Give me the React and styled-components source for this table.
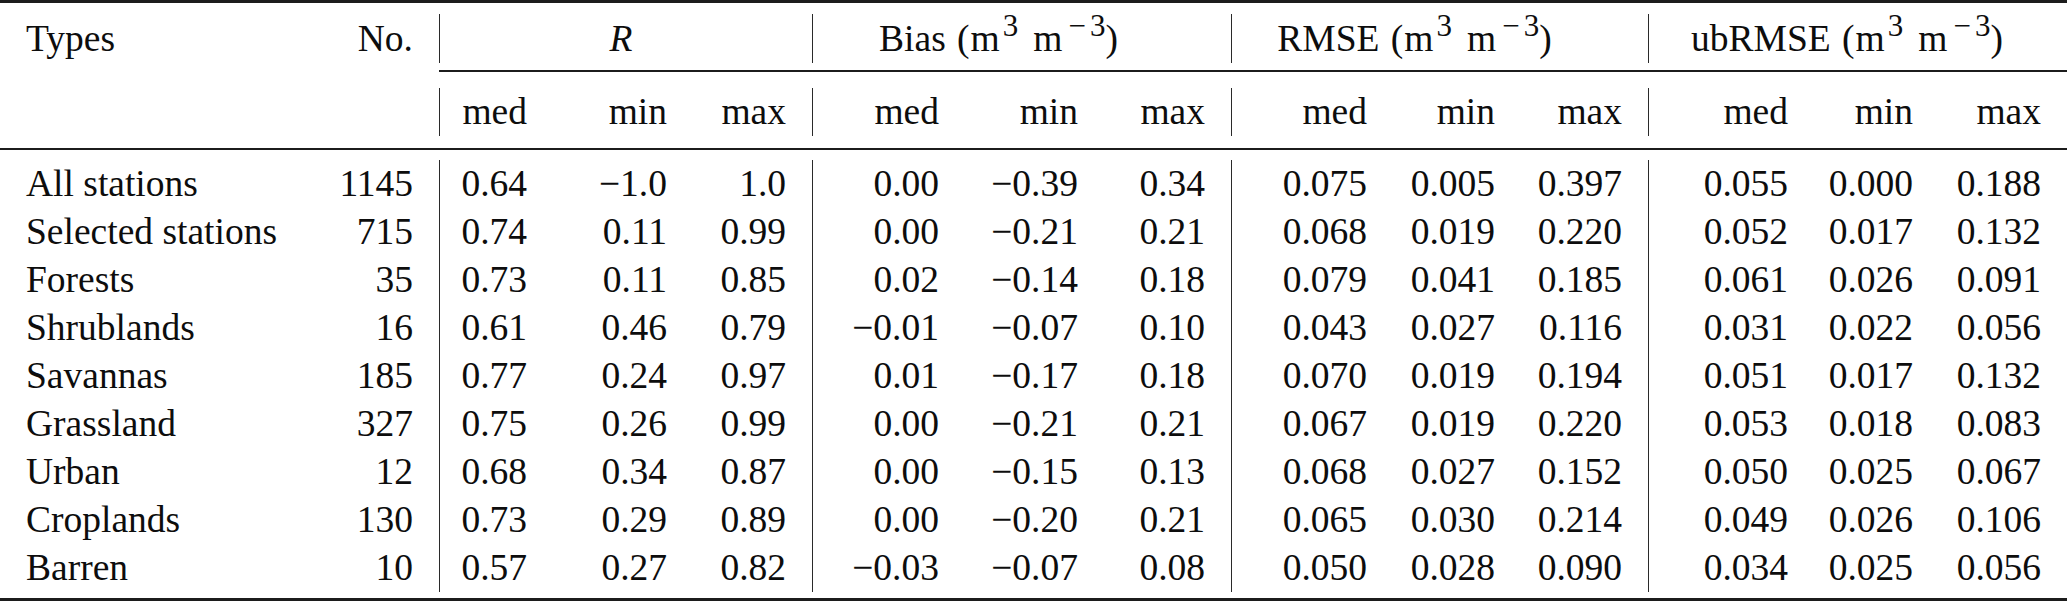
import React from "react";
import styled, { createGlobalStyle } from "styled-components";

const COLS = [300, 139, 114, 140, 119, 153, 139, 127, 162, 128, 127, 166, 125, 128];
const template = COLS.map((w) => `${w}px`).join(" ");

const GlobalStyle = createGlobalStyle`
  html, body {
    margin: 0;
    padding: 0;
    background: #ffffff;
  }
  body {
    font-family: "Liberation Serif", "Times New Roman", serif;
    color: #0d0d0d;
  }
`;

const Table = styled.div`
  width: 2067px;
  display: flex;
  flex-direction: column;
  font-size: 37.5px;
`;

const Rule = styled.div`
  height: ${(p) => p.$h}px;
  margin-left: ${(p) => p.$indent || 0}px;
  background: #1c1c1c;
`;

const Row = styled.div`
  display: grid;
  grid-template-columns: ${template};
  padding: ${(p) => p.$pad || "0"};
`;

const Body = styled.div`
  display: flex;
  flex-direction: column;
  padding: 10px 0 6px;
`;

const Cell = styled.div`
  height: ${(p) => p.$h || 48}px;
  line-height: ${(p) => p.$h || 48}px;
  box-sizing: border-box;
  text-align: ${(p) => p.$align || "right"};
  padding: ${(p) =>
    p.$align === "left" ? "0 0 0 26px" : p.$align === "center" ? `0 ${p.$shift || 0}px 0 0` : "0 26px 0 0"};
  grid-column: span ${(p) => p.$span || 1};
  border-left: ${(p) => (p.$bar ? "1.5px solid #2a2a2a" : "none")};
  white-space: nowrap;
`;

const Italic = styled.span`
  font-style: italic;
`;

const UnitWrap = styled.span`
  letter-spacing: 1px;
  margin-left: 2px;
`;

const Sup = styled.span`
  font-size: 31px;
  line-height: 0;
  position: relative;
  top: -15px;
  margin-left: 2px;
  letter-spacing: 0;
`;

const Gap = styled.span`
  display: inline-block;
  width: 15px;
`;

const Minus = styled.span`
  padding: 0 4px 0 3px;
`;

const Unit = () => (
  <UnitWrap>
    (m<Sup>3</Sup>
    <Gap />m
    <Sup>
      <Minus>−</Minus>3
    </Sup>
    )
  </UnitWrap>
);

const rows = [
  ["All stations", "1145", "0.64", "−1.0", "1.0", "0.00", "−0.39", "0.34", "0.075", "0.005", "0.397", "0.055", "0.000", "0.188"],
  ["Selected stations", "715", "0.74", "0.11", "0.99", "0.00", "−0.21", "0.21", "0.068", "0.019", "0.220", "0.052", "0.017", "0.132"],
  ["Forests", "35", "0.73", "0.11", "0.85", "0.02", "−0.14", "0.18", "0.079", "0.041", "0.185", "0.061", "0.026", "0.091"],
  ["Shrublands", "16", "0.61", "0.46", "0.79", "−0.01", "−0.07", "0.10", "0.043", "0.027", "0.116", "0.031", "0.022", "0.056"],
  ["Savannas", "185", "0.77", "0.24", "0.97", "0.01", "−0.17", "0.18", "0.070", "0.019", "0.194", "0.051", "0.017", "0.132"],
  ["Grassland", "327", "0.75", "0.26", "0.99", "0.00", "−0.21", "0.21", "0.067", "0.019", "0.220", "0.053", "0.018", "0.083"],
  ["Urban", "12", "0.68", "0.34", "0.87", "0.00", "−0.15", "0.13", "0.068", "0.027", "0.152", "0.050", "0.025", "0.067"],
  ["Croplands", "130", "0.73", "0.29", "0.89", "0.00", "−0.20", "0.21", "0.065", "0.030", "0.214", "0.049", "0.026", "0.106"],
  ["Barren", "10", "0.57", "0.27", "0.82", "−0.03", "−0.07", "0.08", "0.050", "0.028", "0.090", "0.034", "0.025", "0.056"],
];

// first column of each metric group carries a vertical bar
const barCols = [2, 5, 8, 11];
const subHeads = ["med", "min", "max"];

const App = () => {
  return (
    <>
      <GlobalStyle />
      <Table>
        <Rule $h={3} />
        <Row $pad="11px 0 7px">
          <Cell $h={49} $align="left">Types</Cell>
          <Cell $h={49}>No.</Cell>
          <Cell $h={49} $span={3} $bar $align="center" $shift={10}>
            <Italic>R</Italic>
          </Cell>
          <Cell $h={49} $span={3} $bar $align="center" $shift={46}>
            Bias <Unit />
          </Cell>
          <Cell $h={49} $span={3} $bar $align="center" $shift={50}>
            RMSE <Unit />
          </Cell>
          <Cell $h={49} $span={3} $bar $align="center" $shift={21}>
            ubRMSE <Unit />
          </Cell>
        </Row>
        <Rule $h={2} $indent={439} />
        <Row $pad="16px 0 12px">
          <Cell $span={2} />
          {barCols.map((c) =>
            subHeads.map((s, i) => (
              <Cell key={`${c}-${s}`} $bar={i === 0}>
                {s}
              </Cell>
            ))
          )}
        </Row>
        <Rule $h={2} />
        <Body>
          {rows.map((r) => (
            <Row key={r[0]}>
              {r.map((v, i) => (
                <Cell key={i} $align={i === 0 ? "left" : "right"} $bar={barCols.includes(i)}>
                  {v}
                </Cell>
              ))}
            </Row>
          ))}
        </Body>
        <Rule $h={3} />
      </Table>
    </>
  );
};

export default App;
